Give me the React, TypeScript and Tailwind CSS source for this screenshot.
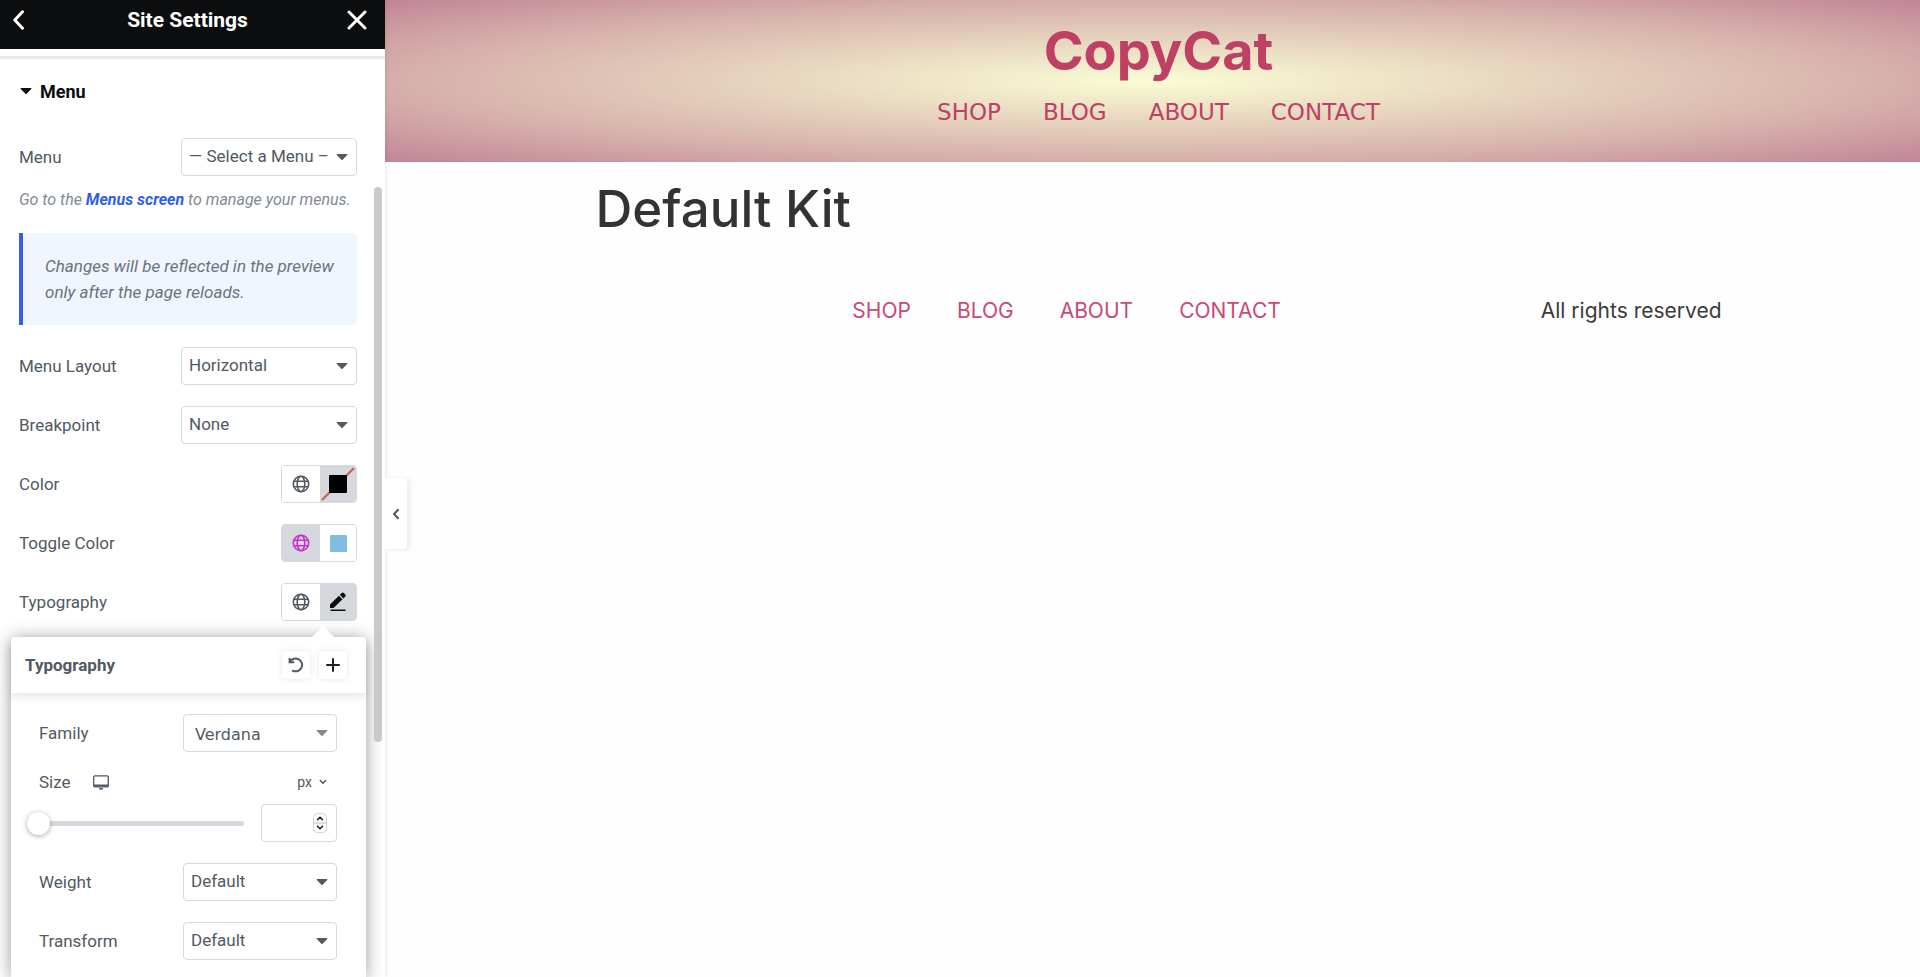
import React from 'react';

const labelClass = 'text-[17px] leading-6 text-[#515962]';

const menuLinks = ['SHOP', 'BLOG', 'ABOUT', 'CONTACT'];

function Caret({ className = '' }: { className?: string }) {
  return (
    <svg viewBox="0 0 12 8" className={`pointer-events-none absolute top-1/2 h-2 w-3 -translate-y-1/2 ${className}`} fill="currentColor" aria-hidden="true">
      <path d="M1.2 1h9.6c.5 0 .8.6.4 1L6.6 6.7a.8.8 0 0 1-1.2 0L.8 2c-.4-.4-.1-1 .4-1z" />
    </svg>
  );
}

function Globe() {
  return (
    <svg viewBox="0 0 18 18" className="size-[18px]" fill="none" stroke="currentColor" strokeWidth="1.6" aria-hidden="true">
      <circle cx="9" cy="9" r="7.7" />
      <ellipse cx="9" cy="9" rx="3.8" ry="7.7" />
      <path d="M1.8 6.2h14.4M1.8 11.8h14.4" />
    </svg>
  );
}

function SelectRow({ id, label, value, narrow = false, family = false }: { id: string; label: string; value: string; narrow?: boolean; family?: boolean }) {
  return (
    <div className="flex h-[38px] items-center justify-between">
      <label htmlFor={id} className={labelClass}>{label}</label>
      <div className={`relative text-[#515962] ${narrow ? 'w-[154px]' : 'w-44'}`}>
        <select
          id={id}
          className={`h-[38px] w-full appearance-none rounded border border-[#d5d8dc] bg-white outline-none ${
            family ? "pt-1 pl-[11px] font-['DejaVu_Sans',Verdana,sans-serif] text-[16px]" : 'pl-[7px] text-[17px]'
          }`}
        >
          <option>{value}</option>
        </select>
        <Caret className={family ? 'right-[9px] text-[#888]' : 'right-[9px]'} />
      </div>
    </div>
  );
}

// Pair of joined buttons: global value on the left, custom value on the right
function ToggleRow({ label, active, global = 'text-[#515962]', children }: { label: string; active: 'left' | 'right'; global?: string; children: React.ReactNode }) {
  return (
    <div className="flex h-[38px] items-center justify-between">
      <span className={labelClass}>{label}</span>
      <div className="flex h-[38px] w-19 overflow-hidden rounded border border-[#d5d8dc]">
        <button aria-label={`${label} global`} className={`flex w-[38px] items-center justify-center ${global} ${active === 'left' ? 'bg-[#d5d8dc]' : 'bg-white'}`}>
          <Globe />
        </button>
        <button aria-label={`${label} custom`} className={`flex w-9 items-center justify-center ${active === 'right' ? 'bg-[#d5d8dc]' : 'bg-white'}`}>
          {children}
        </button>
      </div>
    </div>
  );
}

function TypographyPopover() {
  const headerButton = 'flex size-7 items-center justify-center rounded bg-white shadow-[0_0_6px_rgba(0,0,0,0.1)]';

  return (
    <section className="relative -mr-[9px] -ml-2 mt-4 flex-1 rounded-t bg-white shadow-[0_2px_18px_rgba(0,0,0,0.4)]">
      <svg viewBox="0 0 24 12" className="absolute -top-[11px] right-[31px] h-3 w-6 text-white" fill="currentColor" aria-hidden="true">
        <path d="M0 12 10.5 1.5q1.5-1.5 3 0L24 12z" />
      </svg>
      <header className="flex h-14 items-center justify-between rounded-t pr-[19px] pl-[14px] shadow-[0_4px_10px_rgba(0,0,0,0.1)]">
        <h3 className="text-[17px] leading-6 font-bold text-[#515962]">Typography</h3>
        <div className="flex gap-[9px]">
          <button aria-label="Reset" className={`${headerButton} text-[#515962]`}>
            <svg viewBox="0 0 16 16" className="size-4" fill="none" stroke="currentColor" strokeWidth="2" aria-hidden="true">
              <path d="M1.6 1v4.3h4.6M2 5A6.4 6.4 0 1 1 4.2 13.3" />
            </svg>
          </button>
          <button aria-label="Add" className={`${headerButton} text-[#1f2124]`}>
            <svg viewBox="0 0 14 14" className="size-3.5" fill="none" stroke="currentColor" strokeWidth="2" strokeLinecap="round" aria-hidden="true">
              <path d="M7 1v12M1 7h12" />
            </svg>
          </button>
        </div>
      </header>

      <div className="flex flex-col gap-[21px] pt-[21px] pr-[29px] pl-7">
        <SelectRow id="family" label="Family" value="Verdana" narrow family />
        <div className="-mt-px">
          <div className="flex h-5 items-center justify-between">
            <div className="flex items-center gap-[22px]">
              <label htmlFor="size" className={labelClass}>Size</label>
              <button aria-label="Desktop" className="text-[#515962]">
                <svg viewBox="0 0 16 15" className="h-[15px] w-4" fill="none" stroke="currentColor" strokeWidth="1.3" aria-hidden="true">
                  <rect x=".7" y=".8" width="14.6" height="11" rx="1" />
                  <path d="M1 10.6h14" strokeWidth="2.2" />
                  <path d="M6.2 13.8h3.6" strokeWidth="1.6" />
                </svg>
              </button>
            </div>
            <button className="mr-[10px] flex items-center gap-[7px] text-[14px] leading-5 text-[#515962]">
              px
              <svg viewBox="0 0 8 6" className="h-1.5 w-2" fill="none" stroke="currentColor" strokeWidth="1.4" strokeLinecap="round" aria-hidden="true">
                <path d="M1.2 1.4 4 4.2l2.8-2.8" />
              </svg>
            </button>
          </div>
          <div className="mt-3 flex items-center justify-between">
            <input
              type="range"
              aria-label="Size slider"
              defaultValue={0}
              className="-ml-3 h-6 w-[217px] appearance-none bg-transparent [&::-webkit-slider-runnable-track]:h-[5px] [&::-webkit-slider-runnable-track]:rounded-full [&::-webkit-slider-runnable-track]:bg-[#d5d8dc] [&::-webkit-slider-thumb]:-mt-[9px] [&::-webkit-slider-thumb]:size-[23px] [&::-webkit-slider-thumb]:appearance-none [&::-webkit-slider-thumb]:rounded-full [&::-webkit-slider-thumb]:bg-white [&::-webkit-slider-thumb]:shadow-[0_1px_5px_rgba(0,0,0,0.35)]"
            />
            <div className="relative w-19">
              <input
                id="size"
                type="number"
                className="h-[38px] w-full appearance-none rounded border border-[#d5d8dc] px-2 text-[17px] [appearance:textfield] [&::-webkit-inner-spin-button]:appearance-none"
              />
              <svg viewBox="0 0 14 20" className="pointer-events-none absolute top-[9px] right-[10px] h-5 w-3.5" fill="none" aria-hidden="true">
                <rect x=".5" y=".5" width="13" height="19" rx="4" fill="#fff" stroke="#d2d2d2" />
                <path d="M.5 10h13" stroke="#bbb" />
                <path d="m4.5 6.8 2.5-2.5 2.5 2.5M4.5 13.2l2.5 2.5 2.5-2.5" stroke="#222" strokeWidth="1.6" strokeLinecap="round" />
              </svg>
            </div>
          </div>
        </div>
        <SelectRow id="weight" label="Weight" value="Default" narrow />
        <SelectRow id="transform" label="Transform" value="Default" narrow />
      </div>
    </section>
  );
}

function Sidebar() {
  return (
    <aside className="relative flex w-[385px] shrink-0 flex-col bg-white font-[Roboto,sans-serif] shadow-[0_0_5px_rgba(0,0,0,0.12)]">
      <header className="flex h-[49px] items-center justify-between bg-[#0c0d0e] px-3 pb-[9px] text-white">
        <button aria-label="Back" className="w-4">
          <svg viewBox="0 0 12 20" className="h-5 w-3" fill="none" stroke="currentColor" strokeWidth="3" strokeLinecap="round" strokeLinejoin="round" aria-hidden="true">
            <path d="M10.5 1.8 2.8 10l7.7 8.2" />
          </svg>
        </button>
        <h1 className="text-[21px] leading-6 font-bold">Site Settings</h1>
        <button aria-label="Close" className="mr-[6px]">
          <svg viewBox="0 0 20 20" className="size-5" fill="none" stroke="currentColor" strokeWidth="3" strokeLinecap="round" aria-hidden="true">
            <path d="m2 2 16 16M18 2 2 18" />
          </svg>
        </button>
      </header>

      <div className="flex flex-1 flex-col overflow-hidden pt-[7px]">
        <div className="h-[3px] bg-[#e6e9ec]" />
        <div className="flex flex-1 flex-col pr-7 pl-[19px]">
          <button className="mt-5 flex h-6 items-center gap-2 text-[18px] font-bold text-[#0c0d0e]">
            <svg viewBox="0 0 12 8" className="ml-px h-2 w-3" fill="currentColor" aria-hidden="true">
              <path d="M1.2 1h9.6c.5 0 .8.6.4 1L6.6 6.7a.8.8 0 0 1-1.2 0L.8 2c-.4-.4-.1-1 .4-1z" />
            </svg>
            Menu
          </button>

          <div className="mt-[35px]">
            <SelectRow id="menu" label="Menu" value="— Select a Menu –" />
          </div>
          <p className="mt-[14px] text-[16px] leading-5 whitespace-nowrap text-[#818a96] italic">
            Go to the <a href="#menus" className="font-bold text-[#2f5fe5]">Menus screen</a> to manage your menus.
          </p>
          <p className="mt-[23px] rounded-r border-l-4 border-[#355fe8] bg-[#f0f5ff] py-5 pr-4 pl-[22px] text-[17px] leading-[26px] text-[#6b737c] italic">
            Changes will be reflected in the preview only after the page reloads.
          </p>

          <div className="mt-[22px] flex flex-col gap-[21px]">
            <SelectRow id="layout" label="Menu Layout" value="Horizontal" />
            <SelectRow id="breakpoint" label="Breakpoint" value="None" />
            <ToggleRow label="Color" active="right">
              <svg viewBox="0 0 36 36" className="size-9" aria-hidden="true">
                <path d="M2 34 34 2" stroke="#d3625c" strokeWidth="2.4" />
                <rect x="9" y="9" width="18" height="18" rx="1" fill="#000" />
              </svg>
            </ToggleRow>
            <ToggleRow label="Toggle Color" active="left" global="text-[#c92fd0]">
              <span className="size-[17px] rounded-[1px] bg-[#80bddf]" />
            </ToggleRow>
            <ToggleRow label="Typography" active="right">
              <svg viewBox="0 0 18 20" className="h-5 w-[18px] text-[#0c0d0e]" fill="currentColor" aria-hidden="true">
                <path d="M1 12.5 9.9 3.7l3.6 3.6-8.9 8.8H1z" />
                <path d="M10.8 2.8 12.7 1a1.5 1.5 0 0 1 2.1 0l1.5 1.5a1.5 1.5 0 0 1 0 2.1l-1.9 1.8z" />
                <path d="M1.5 17.6h15V19h-15z" />
              </svg>
            </ToggleRow>
          </div>

          <TypographyPopover />
        </div>
      </div>

      <div className="absolute top-[187px] right-[3px] h-[555px] w-2 rounded-full bg-[#c9c9c9]" />
      <button aria-label="Hide panel" className="absolute top-[478px] left-full flex h-[71px] w-[22px] items-center justify-center rounded-r bg-white text-[#515962] shadow-[3px_1px_5px_rgba(0,0,0,0.08)]">
        <svg viewBox="0 0 8 12" className="h-3 w-2" fill="none" stroke="currentColor" strokeWidth="2" aria-hidden="true">
          <path d="M6.6 1.2 2 6l4.6 4.8" />
        </svg>
      </button>
    </aside>
  );
}

function Preview() {
  return (
    <main className="min-w-0 flex-1 bg-[#fefefe] font-[Inter,sans-serif]">
      <header className="bg-[radial-gradient(ellipse_at_center,#fafdd5_0%,#d5aea9_70%,#c28498_100%)] pt-[15px] pb-[35px] pl-3 text-center text-[#bf4065]">
        <div className="text-[54px] leading-[72px] font-bold">CopyCat</div>
        <nav className="mt-[10px] flex justify-center gap-[42px] font-['DejaVu_Sans',Verdana,sans-serif] text-[23px] leading-[30px]">
          {menuLinks.map((link) => (
            <a key={link} href={`#${link.toLowerCase()}`}>{link}</a>
          ))}
        </nav>
      </header>

      <div className="pl-3">
        <div className="mx-auto max-w-[1126px]">
          <h2 className="pt-3 text-[51px] leading-[70px] font-medium text-[#333]">Default Kit</h2>
          <footer className="mt-[52px] flex items-center justify-end gap-[260px] text-[21px] leading-[30px]">
            <nav className="flex gap-[46px] text-[#c94a72]">
              {menuLinks.map((link) => (
                <a key={link} href={`#footer-${link.toLowerCase()}`}>{link}</a>
              ))}
            </nav>
            <p className="text-[#3a3a3a]">All rights reserved</p>
          </footer>
        </div>
      </div>
    </main>
  );
}

export default function App() {
  return (
    <div className="flex min-h-screen overflow-x-hidden">
      <div className="relative z-10 flex">
        <Sidebar />
      </div>
      <Preview />
    </div>
  );
}
